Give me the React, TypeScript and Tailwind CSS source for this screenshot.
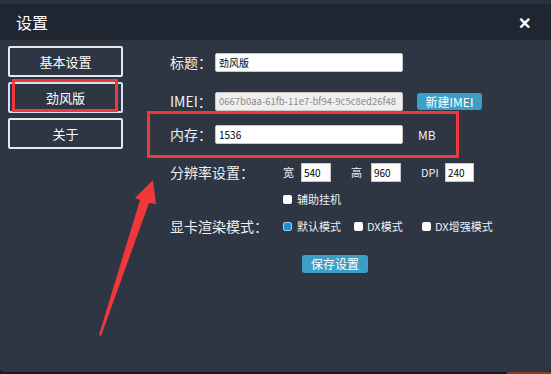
import React from 'react'

const font = { fontFamily: '"Noto Sans CJK SC", "Liberation Sans", sans-serif' }

function Check({ on = false }: { on?: boolean }) {
  return (
    <span className={`inline-block w-[9px] h-[9px] rounded-[2px] ${on ? 'bg-[#1e8fd6] border border-[#9ecff0]' : 'bg-white'}`} />
  )
}

function SideButton({ label, active = false }: { label: string; active?: boolean }) {
  return (
    <div className={`h-[31px] w-[115px] flex items-center justify-center text-[13px] text-white border-2 ${active ? 'border-[#cfe3f5]' : 'border-[#e8e8e8]'} rounded-[2px]`}>
      {label}
    </div>
  )
}

export default function App() {
  return (
    <div className="relative w-[551px] h-[374px] bg-[#161b22] overflow-hidden" style={font}>
      <div className="h-[372px] bg-[#2e3643] rounded-b-[4px] flex flex-col">
        {/* Title bar */}
        <div className="h-[4px] bg-[#2a313c]" />
        <div className="h-[36px] bg-[#1f2631] flex items-center justify-between pl-[16px] pr-[20px]">
          <span className="text-white text-[16px]">设置</span>
          <span className="text-white text-[16px] font-bold leading-none">✕</span>
        </div>

        <div className="flex">
          {/* Side menu */}
          <div className="pl-[8px] pt-[6px] flex flex-col gap-[5px]">
            <SideButton label="基本设置" />
            <SideButton label="劲风版" active />
            <SideButton label="关于" />
          </div>

          {/* Form */}
          <div className="pl-[47px] pt-[13px] flex flex-col text-[#eef0f2]">
            <div className="flex items-center h-[19px]">
              <span className="w-[45px] text-[14px]">标题：</span>
              <div className="w-[188px] h-[19px] bg-white rounded-[2px] border border-[#c8c8c8] flex items-center px-[3px] text-[10px] text-black">劲风版</div>
            </div>

            <div className="flex items-center h-[19px] mt-[20px]">
              <span className="w-[45px] text-[14px]">IMEI：</span>
              <div className="w-[188px] h-[19px] bg-[#efefef] rounded-[2px] border border-[#c8c8c8] flex items-center px-[3px] text-[9.5px] text-[#8a8a8a] whitespace-nowrap overflow-hidden">0667b0aa-61fb-11e7-bf94-9c5c8ed26f48</div>
              <div className="ml-[14px] w-[65px] h-[17px] bg-[#3d9fc6] rounded-[3px] flex items-center justify-center text-[12px] text-white">新建IMEI</div>
            </div>

            <div className="flex items-center h-[19px] mt-[14px]">
              <span className="w-[45px] text-[14px]">内存：</span>
              <div className="w-[188px] h-[19px] bg-white rounded-[2px] border border-[#c8c8c8] flex items-center px-[3px] text-[10px] text-black">1536</div>
              <span className="ml-[15px] text-[12px]">MB</span>
            </div>

            <div className="flex items-center h-[19px] mt-[19px]">
              <span className="w-[113px] text-[14px]">分辨率设置：</span>
              <span className="w-[18px] text-[11px]">宽</span>
              <div className="w-[30px] h-[19px] bg-white border border-[#c8c8c8] flex items-center px-[2px] text-[10px] text-black">540</div>
              <span className="ml-[20px] w-[20px] text-[11px]">高</span>
              <div className="w-[30px] h-[19px] bg-white border border-[#c8c8c8] flex items-center px-[2px] text-[10px] text-black">960</div>
              <span className="ml-[20px] w-[24px] text-[11px]">DPI</span>
              <div className="w-[29px] h-[19px] bg-white border border-[#c8c8c8] flex items-center px-[2px] text-[10px] text-black">240</div>
            </div>

            <div className="flex items-center h-[16px] mt-[9px] pl-[113px] gap-[5px] text-[11px]">
              <Check />
              <span>辅助挂机</span>
            </div>

            <div className="flex items-center h-[20px] mt-[9px] text-[11px]">
              <span className="w-[113px] text-[14px]">显卡渲染模式：</span>
              <div className="flex items-center gap-[5px] w-[71px]"><Check on /><span>默认模式</span></div>
              <div className="flex items-center gap-[4px] w-[68px]"><Check /><span>DX模式</span></div>
              <div className="flex items-center gap-[4px]"><Check /><span>DX增强模式</span></div>
            </div>

            <div className="mt-[19px] ml-[132px] w-[66px] h-[18px] bg-[#3d9fc6] rounded-[3px] flex items-center justify-center text-[12px] text-white">保存设置</div>
          </div>
        </div>
      </div>
      <div className="absolute right-0 bottom-0 w-[44px] h-[2px] bg-[#8a3a22]" />

      {/* Annotations */}
      <div className="absolute left-[12px] top-[79px] w-[106px] h-[33px] border-[3px] border-[#f0383a]" />
      <div className="absolute left-[147px] top-[111px] w-[312px] h-[47px] border-[3px] border-[#f0383a]" />
      <svg className="absolute left-0 top-0" width="551" height="374" viewBox="0 0 551 374">
        <polygon points="153,180 156,204 149,203 101,336 99,335 140,200 135,198" fill="#f0383a" />
      </svg>
    </div>
  )
}
